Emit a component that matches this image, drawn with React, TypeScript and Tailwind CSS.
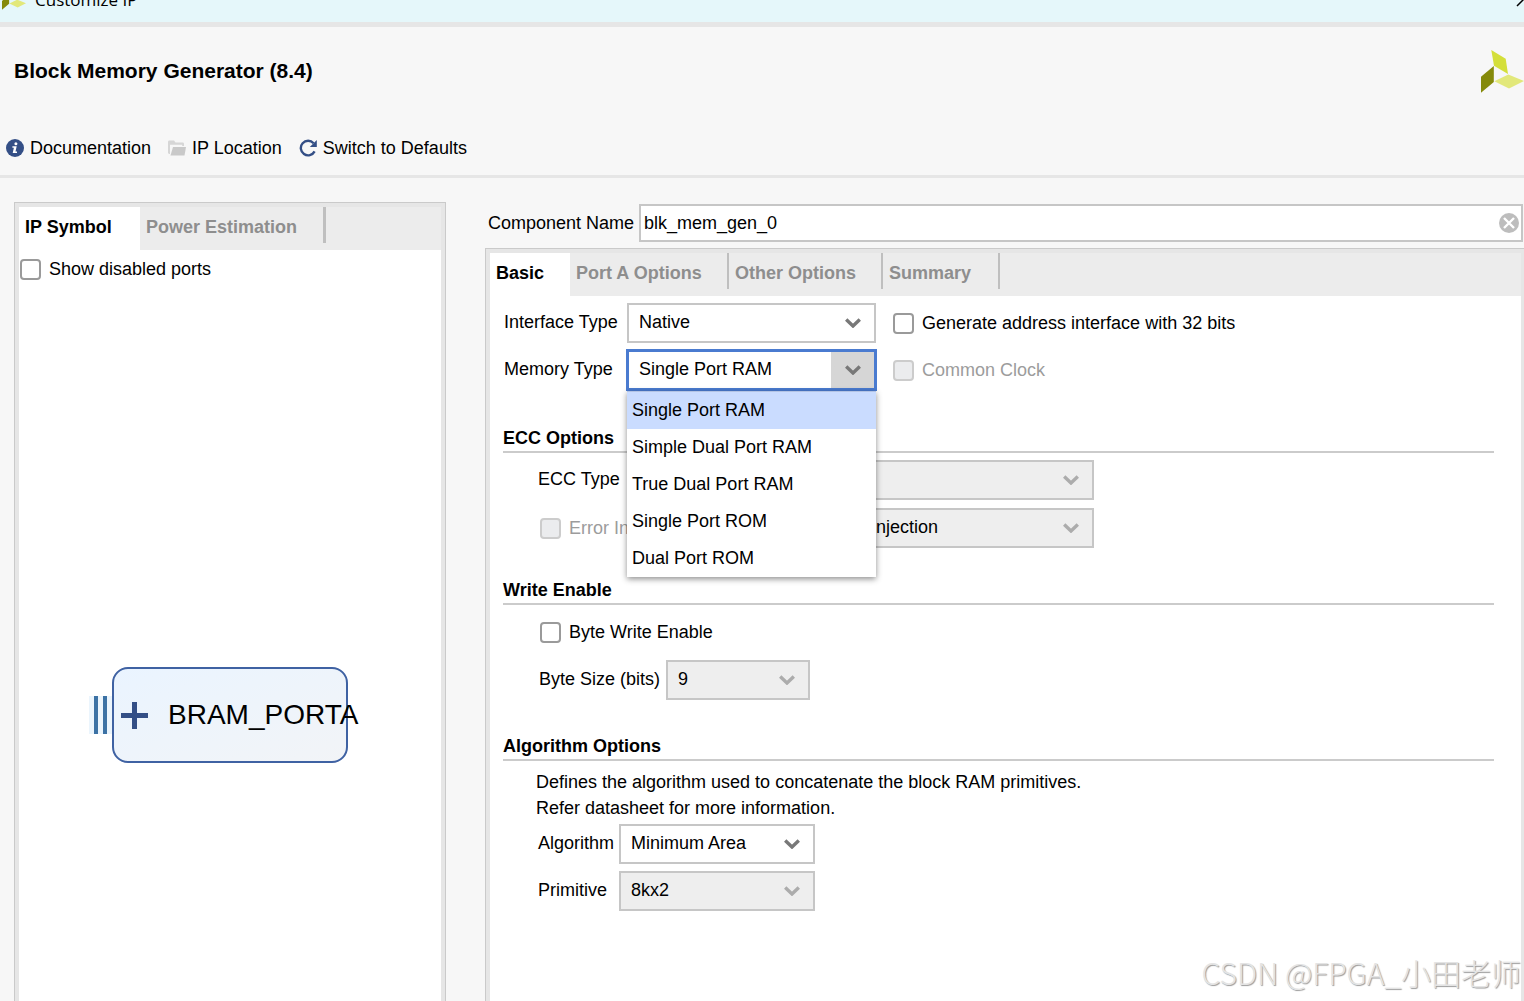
import React, { useState } from 'react';

const memoryTypes = [
  'Single Port RAM',
  'Simple Dual Port RAM',
  'True Dual Port RAM',
  'Single Port ROM',
  'Dual Port ROM',
];

const Logo: React.FC<{ className?: string }> = ({ className }) => (
  <svg viewBox="0 0 43 43" className={className} aria-hidden="true">
    <path d="M10.3 0 24.7 8.7 27 24 13 15.7Z" fill="#d4df3a" />
    <path d="M0 26.7 12.8 16v16L0 42.7Z" fill="#858a0a" />
    <path d="M13.3 31.3 27.3 24.5 43 31 28 38.5Z" fill="#e2e87a" />
  </svg>
);

const InfoIcon = () => (
  <svg viewBox="0 0 18 18" className="h-[18px] w-[18px]" aria-hidden="true">
    <circle cx="9" cy="9" r="9" fill="#344f86" />
    <circle cx="9.9" cy="4.8" r="1.5" fill="#fff" />
    <path d="M6.4 7.2h4.3l-1.2 5.2h1.5v1.5H6.7l1.2-5.2H6.4Z" fill="#fff" />
  </svg>
);

const FolderIcon = () => (
  <svg viewBox="0 0 18 16" className="h-4 w-[18px]" aria-hidden="true">
    <path d="M0 1.5.8.5H6l1.5 2h7.7l.8 1V6h-1.8V4.8H2V14H1L0 13Z" fill="#d6d6d6" />
    <path d="M5 7h13l-1.5 8.5H2.5Z" fill="#c9c9c9" />
  </svg>
);

const ResetIcon = () => (
  <svg viewBox="0 0 18 18" className="h-[18px] w-[18px]" aria-hidden="true">
    <path d="M14.6 4.2A7.3 7.3 0 1 0 15.6 12.4" fill="none" stroke="#344f86" strokeWidth="2.4" />
    <path d="M17.8 1v7h-7Z" fill="#344f86" />
  </svg>
);

const Chevron: React.FC<{ className: string }> = ({ className }) => (
  <svg viewBox="0 0 16 10" className={`pointer-events-none absolute top-[15px] right-[15px] h-[10px] w-4 ${className}`} aria-hidden="true">
    <path d="M1.2 1.5 8 8l6.8-6.5" fill="none" stroke="currentColor" strokeWidth="3.4" />
  </svg>
);

type SelectProps = {
  id: string;
  options: string[];
  className: string;
  disabled?: boolean;
};

const Select: React.FC<SelectProps> = ({ id, options, className, disabled }) => (
  <div className={`relative ${className}`}>
    <select
      id={id}
      disabled={disabled}
      className="block h-10 w-full appearance-none border-2 border-[#c6c6c6] bg-white pb-[2px] pl-[10px] text-black opacity-100 outline-none disabled:bg-[#eeeeee]"
    >
      {options.map((o) => (
        <option key={o}>{o}</option>
      ))}
    </select>
    <Chevron className={disabled ? 'text-[#acacac]' : 'text-[#787878]'} />
  </div>
);

const FieldLabel: React.FC<{ htmlFor: string; className: string; children: string }> = ({ htmlFor, className, children }) => (
  <label htmlFor={htmlFor} className={`shrink-0 pb-[2px] whitespace-nowrap ${className}`}>
    {children}
  </label>
);

const Checkbox: React.FC<{ id: string; label: string; disabled?: boolean }> = ({ id, label, disabled }) => (
  <div className="flex items-center gap-2">
    <input
      id={id}
      type="checkbox"
      disabled={disabled}
      className="h-[21px] w-[21px] shrink-0 appearance-none rounded border-2 border-[#9a9a9a] bg-white checked:bg-[#4a7bd0] disabled:border-[#cccccc] disabled:bg-[#ebecee]"
    />
    <label htmlFor={id} className={`whitespace-nowrap ${disabled ? 'text-[#9c9c9c]' : ''}`}>
      {label}
    </label>
  </div>
);

const Section: React.FC<{ title: string; children: React.ReactNode }> = ({ title, children }) => (
  <section>
    <h2 className="mr-[27px] ml-[13px] border-b-2 border-[#cbcbcb] pb-px font-bold">{title}</h2>
    {children}
  </section>
);

const tabs = [
  { name: 'Port A Options', width: 'w-[159px]' },
  { name: 'Other Options', width: 'w-[154px]' },
  { name: 'Summary', width: 'w-[117px]' },
];

const MemoryTypeSelect = () => {
  const [value, setValue] = useState(memoryTypes[0]);
  const [open, setOpen] = useState(true);

  return (
    <div className="relative -mx-px w-[251px]">
      <select
        id="memory-type"
        value={value}
        onChange={(e) => setValue(e.target.value)}
        onMouseDown={(e) => {
          e.preventDefault();
          setOpen(!open);
        }}
        className="block h-[42px] w-full appearance-none border-3 border-[#4a7bd0] bg-linear-to-l from-[#d6d6d6] from-[43px] to-white to-[43px] pb-[2px] pl-[10px] outline-none"
      >
        {memoryTypes.map((t) => (
          <option key={t}>{t}</option>
        ))}
      </select>
      <Chevron className="mt-px mr-px text-[#787878]" />
      {open && (
        <ul className="absolute top-full right-px left-px z-10 border-t border-[#b4c4e4] bg-white shadow-[0_2px_6px_rgba(0,0,0,0.45)]">
          {memoryTypes.map((t) => (
            <li key={t}>
              <button
                type="button"
                onClick={() => {
                  setValue(t);
                  setOpen(false);
                }}
                className={`block h-[37px] w-full px-[5px] pb-[2px] text-left ${t === value ? 'bg-[#cadcff]' : 'bg-white'}`}
              >
                {t}
              </button>
            </li>
          ))}
        </ul>
      )}
    </div>
  );
};

const SymbolPanel = () => (
  <aside className="flex w-[432px] shrink-0 flex-col border border-b-0 border-[#cacaca]">
    <div className="flex flex-1 flex-col border-4 border-b-0 border-[#e6e6e6] bg-white">
      <div className="flex h-[43px] bg-[#ececec] font-bold">
        <button type="button" className="w-[121px] bg-white px-[6px] pb-[3px] text-left">IP Symbol</button>
        <button type="button" className="mb-[7px] w-[186px] border-r-3 border-[#bfbfbf] px-[6px] pt-1 text-left text-[#8e8e8e]">
          Power Estimation
        </button>
      </div>
      <div className="px-px py-[7px]">
        <Checkbox id="show-disabled" label="Show disabled ports" />
      </div>
      <div className="mt-[379px] ml-[70px] flex items-center">
        <div className="flex h-[38px] gap-[5px] bg-[#ebf5fd] px-[5px]">
          <span className="w-1 bg-[#3c72a5]" />
          <span className="w-1 bg-[#3c72a5]" />
        </div>
        <div className="flex h-24 w-[236px] items-center gap-5 rounded-2xl border-2 border-[#3f62a3] bg-linear-to-br from-[#eaf4ff] to-[#f2f4f7] pl-[7px]">
          <svg viewBox="0 0 27 27" className="h-[27px] w-[27px] shrink-0" aria-hidden="true">
            <path d="M13.5 0v27M0 13.5h27" stroke="#344f86" strokeWidth="5" />
          </svg>
          <span className="text-[28px] leading-8 whitespace-nowrap">BRAM_PORTA</span>
        </div>
      </div>
    </div>
  </aside>
);

const OptionsPanel = () => (
  <div className="flex flex-1 flex-col border-t border-l border-[#cacaca]">
    <div className="flex-1 border-4 border-r-3 border-b-0 border-[#e6e6e6] bg-white">
      <div className="flex h-[43px] bg-[#ececec] font-bold">
        <button type="button" className="w-20 bg-white px-[6px] pb-[3px] text-left">Basic</button>
        {tabs.map((t) => (
          <button
            key={t.name}
            type="button"
            className={`mb-[7px] border-r-2 border-[#bfbfbf] px-[6px] pt-1 text-left whitespace-nowrap text-[#8e8e8e] ${t.width}`}
          >
            {t.name}
          </button>
        ))}
      </div>

      <div className="flex flex-col gap-[6px] pt-[7px] pb-[35px] pl-[14px]">
        <div className="flex items-center">
          <FieldLabel htmlFor="interface-type" className="w-[123px]">Interface Type</FieldLabel>
          <Select id="interface-type" options={['Native', 'AXI4']} className="mr-[17px] w-[249px]" />
          <Checkbox id="addr32" label="Generate address interface with 32 bits" />
        </div>
        <div className="flex items-center">
          <FieldLabel htmlFor="memory-type" className="w-[123px]">Memory Type</FieldLabel>
          <div className="mr-[17px] w-[249px]">
            <MemoryTypeSelect />
          </div>
          <Checkbox id="common-clock" label="Common Clock" disabled />
        </div>
      </div>

      <Section title="ECC Options">
        <div className="flex flex-col gap-2 pt-[7px] pb-[30px] pl-12">
          <div className="flex items-center">
            <FieldLabel htmlFor="ecc-type" className="w-[91px]">ECC Type</FieldLabel>
            <Select id="ecc-type" options={['No ECC']} className="w-[465px]" disabled />
          </div>
          <div className="flex items-center pl-[2px]">
            <div className="w-[193px]">
              <Checkbox id="error-injection" label="Error Injection Type" disabled />
            </div>
            <Select id="injection-pins" options={['Single Bit Error Injection']} className="w-[361px]" disabled />
          </div>
        </div>
      </Section>

      <Section title="Write Enable">
        <div className="flex flex-col gap-4 pt-[15px] pb-[34px] pl-[49px]">
          <div className="pl-px">
            <Checkbox id="byte-write" label="Byte Write Enable" />
          </div>
          <div className="flex items-center">
            <FieldLabel htmlFor="byte-size" className="w-[127px]">Byte Size (bits)</FieldLabel>
            <Select id="byte-size" options={['9', '8']} className="w-[144px]" disabled />
          </div>
        </div>
      </Section>

      <Section title="Algorithm Options">
        <p className="pt-2 pl-[46px] leading-[26px]">
          Defines the algorithm used to concatenate the block RAM primitives.
          <br />
          Refer datasheet for more information.
        </p>
        <div className="flex flex-col gap-[7px] pt-[3px] pl-12">
          <div className="flex items-center">
            <FieldLabel htmlFor="algorithm" className="w-[81px]">Algorithm</FieldLabel>
            <Select id="algorithm" options={['Minimum Area', 'Low Power', 'Fixed Primitives']} className="w-[196px]" />
          </div>
          <div className="flex items-center">
            <FieldLabel htmlFor="primitive" className="w-[81px]">Primitive</FieldLabel>
            <Select id="primitive" options={['8kx2']} className="w-[196px]" disabled />
          </div>
        </div>
      </Section>
    </div>
  </div>
);

const App: React.FC = () => {
  const [name, setName] = useState('blk_mem_gen_0');

  return (
    <div className="relative flex min-h-screen flex-col overflow-hidden bg-[#f7f7f7] font-['Liberation_Sans',Arial,sans-serif] text-[18px] leading-6 text-black">
      <div className="flex h-[27px] items-end justify-between overflow-hidden border-b-5 border-[#e6e6e6] bg-[#e5f7fa] pb-[10px]">
        <div className="flex items-end gap-[9px] pl-[2px]">
          <Logo className="mb-[2px] h-6 w-6" />
          <span className="font-['Open_Sans','Noto_Sans',sans-serif] text-[17px] leading-6">Customize IP</span>
        </div>
        <button type="button" aria-label="Close" className="-mr-2 mb-[5px]">
          <svg viewBox="0 0 16 16" className="h-4 w-4" aria-hidden="true">
            <path d="M1 1l14 14M15 1 1 15" stroke="#000" strokeWidth="1.5" />
          </svg>
        </button>
      </div>

      <header className="border-b-3 border-[#e6e6e6] pt-[23px] pb-[15px]">
        <div className="flex items-center justify-between pl-[14px]">
          <h1 className="pb-[2px] text-[21px] leading-6 font-bold">Block Memory Generator (8.4)</h1>
          <Logo className="h-[43px] w-[43px]" />
        </div>
        <nav className="mt-[43px] flex items-center gap-[17px] pl-[6px]">
          <a href="#documentation" className="flex items-center gap-[6px]">
            <InfoIcon />
            Documentation
          </a>
          <a href="#location" className="flex items-center gap-[6px]">
            <FolderIcon />
            IP Location
          </a>
          <button type="button" className="flex items-center gap-[6px]">
            <ResetIcon />
            Switch to Defaults
          </button>
        </nav>
      </header>

      <main className="flex flex-1 gap-[39px] pt-6 pl-[14px]">
        <SymbolPanel />
        <div className="flex min-w-0 flex-1 flex-col">
          <div className="mt-[2px] mb-[6px] flex items-center pr-px pl-[3px]">
            <label htmlFor="component-name" className="w-[151px] shrink-0">Component Name</label>
            <div className="relative flex-1">
              <input
                id="component-name"
                type="text"
                value={name}
                onChange={(e) => setName(e.target.value)}
                className="block h-[38px] w-full border-2 border-[#c6c6c6] bg-white pr-8 pl-[3px] outline-none"
              />
              <button type="button" aria-label="Clear" onClick={() => setName('')} className="absolute top-[9px] right-1">
                <svg viewBox="0 0 20 20" className="h-5 w-5" aria-hidden="true">
                  <circle cx="10" cy="10" r="10" fill="#bdbdbd" />
                  <path d="M5 5l10 10M15 5 5 15" stroke="#fff" strokeWidth="2.4" />
                </svg>
              </button>
            </div>
          </div>
          <OptionsPanel />
        </div>
      </main>

      <div className="pointer-events-none absolute right-[3px] bottom-[9px] font-['Noto_Sans_CJK_SC',sans-serif] text-[30px] leading-10 font-light text-[#e4e4e4] [text-shadow:1px_1px_1px_#9a9a9a]">
        CSDN @FPGA_小田老师
      </div>
    </div>
  );
};

export default App;
